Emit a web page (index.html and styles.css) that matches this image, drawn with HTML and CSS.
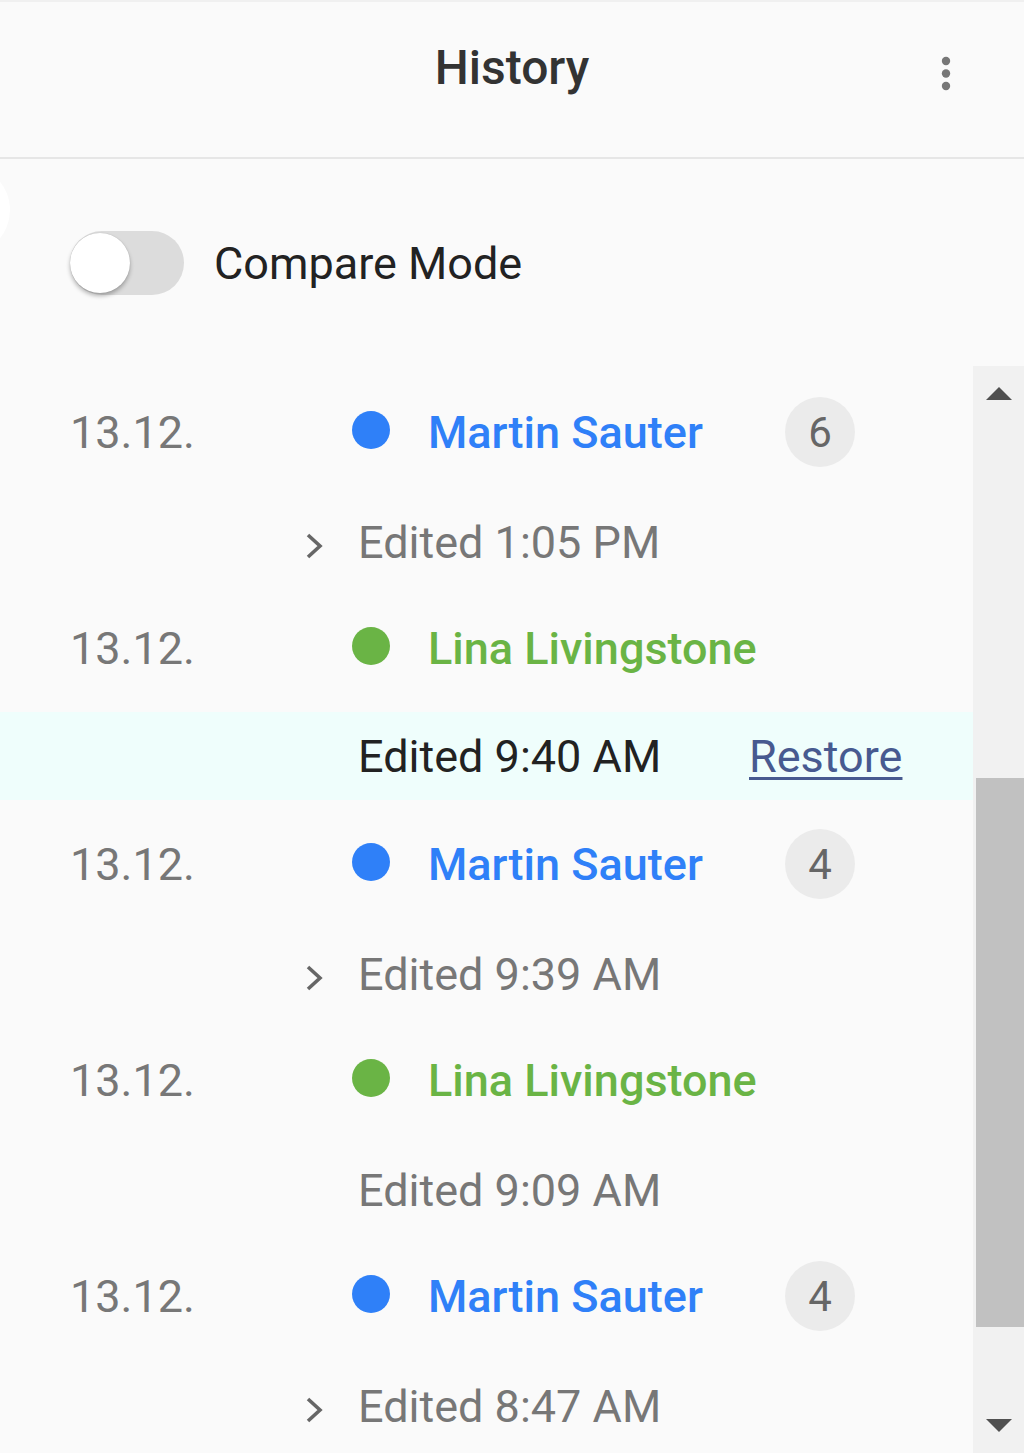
FILE: index.html
```html
<!DOCTYPE html>
<html lang="en">
<head>
<meta charset="utf-8">
<title>History</title>
<link rel="stylesheet" href="styles.css">
</head>
<body>
<div class="app">
  <header class="header">
    <div class="header-side"></div>
    <h1 class="title">History</h1>
    <div class="header-side header-right">
      <svg class="kebab" width="10" height="36" viewBox="0 0 10 36">
        <circle cx="5" cy="5" r="4.2" fill="#777"/>
        <circle cx="5" cy="17.5" r="4.2" fill="#777"/>
        <circle cx="5" cy="30" r="4.2" fill="#777"/>
      </svg>
    </div>
  </header>

  <div class="compare">
    <span class="ripple"></span>
    <div class="toggle"><span class="knob"></span></div>
    <span class="compare-label">Compare Mode</span>
  </div>

  <div class="list-wrap">
    <div class="list">
      <div class="row name-row">
        <span class="date">13.12.</span>
        <span class="dot blue"></span>
        <span class="name blue-text">Martin Sauter</span>
        <span class="badge">6</span>
      </div>
      <div class="row edit-row">
        <span class="chev"><svg width="20" height="26" viewBox="0 0 20 26"><path d="M3 2 L15 13 L3 24" fill="none" stroke="#666" stroke-width="3.6"/></svg></span>
        <span class="edited">Edited 1:05 PM</span>
      </div>

      <div class="row name-row">
        <span class="date">13.12.</span>
        <span class="dot green"></span>
        <span class="name green-text">Lina Livingstone</span>
      </div>
      <div class="row edit-row selected">
        <div class="sel-inner">
          <span class="chev"></span>
          <span class="edited dark">Edited 9:40 AM</span>
          <a class="restore" href="#">Restore</a>
        </div>
      </div>

      <div class="row name-row">
        <span class="date">13.12.</span>
        <span class="dot blue"></span>
        <span class="name blue-text">Martin Sauter</span>
        <span class="badge">4</span>
      </div>
      <div class="row edit-row">
        <span class="chev"><svg width="20" height="26" viewBox="0 0 20 26"><path d="M3 2 L15 13 L3 24" fill="none" stroke="#666" stroke-width="3.6"/></svg></span>
        <span class="edited">Edited 9:39 AM</span>
      </div>

      <div class="row name-row">
        <span class="date">13.12.</span>
        <span class="dot green"></span>
        <span class="name green-text">Lina Livingstone</span>
      </div>
      <div class="row edit-row">
        <span class="chev"></span>
        <span class="edited">Edited 9:09 AM</span>
      </div>

      <div class="row name-row">
        <span class="date">13.12.</span>
        <span class="dot blue"></span>
        <span class="name blue-text">Martin Sauter</span>
        <span class="badge">4</span>
      </div>
      <div class="row edit-row">
        <span class="chev"><svg width="20" height="26" viewBox="0 0 20 26"><path d="M3 2 L15 13 L3 24" fill="none" stroke="#666" stroke-width="3.6"/></svg></span>
        <span class="edited">Edited 8:47 AM</span>
      </div>
    </div>

    <div class="scrollbar">
      <div class="arrow up"></div>
      <div class="track-top"></div>
      <div class="thumb"></div>
      <div class="track-bottom"></div>
      <div class="arrow down"></div>
    </div>
  </div>
</div>
</body>
</html>
```

FILE: styles.css
```css
html, body {
  margin: 0;
  padding: 0;
  background: #fafafa;
  font-family: Roboto, "Liberation Sans", Arial, sans-serif;
}

.app {
  width: 1024px;
  height: 1453px;
  overflow: hidden;
  background: #fafafa;
}

.header {
  height: 155px;
  border-top: 2px solid #f0f0f0;
  border-bottom: 2px solid #e6e6e6;
  display: grid;
  grid-template-columns: 1fr auto 1fr;
  align-items: start;
  box-sizing: content-box;
}

.title {
  margin: 0;
  padding-top: 42px;
  font-size: 48px;
  line-height: 48px;
  font-weight: 500;
  color: #333;
}

.header-right {
  display: flex;
  justify-content: flex-end;
  padding-right: 73px;
  padding-top: 54px;
}

.compare {
  position: relative;
  height: 207px;
  display: flex;
  align-items: center;
  padding-left: 70px;
  gap: 30px;
}

.ripple {
  position: absolute;
  left: -80px;
  top: 6px;
  width: 90px;
  height: 90px;
  border-radius: 50%;
  background: #ffffff;
}

.toggle {
  position: relative;
  width: 114px;
  height: 64px;
  border-radius: 32px;
  background: #dcdcdc;
  display: flex;
  align-items: center;
}

.knob {
  width: 60px;
  height: 60px;
  border-radius: 50%;
  background: #ffffff;
  box-shadow: 0 3px 4px rgba(0, 0, 0, 0.28), 0 0 1px rgba(0, 0, 0, 0.2);
}

.compare-label {
  font-size: 45px;
  color: #222;
  margin-top: 2px;
}

.list-wrap {
  display: flex;
  height: 1087px;
}

.list {
  flex: 1;
  padding-top: 12px;
  overflow: hidden;
}

.row {
  height: 108px;
  display: flex;
  align-items: center;
  box-sizing: border-box;
}

.name-row {
  padding-left: 70px;
}

.date {
  width: 282px;
  font-size: 45px;
  color: #777;
}

.dot {
  width: 38px;
  height: 38px;
  border-radius: 50%;
  margin-right: 38px;
  margin-top: -4px;
}

.dot.blue { background: #2f80f8; }
.dot.green { background: #6ab445; }

.name {
  width: 357px;
  font-size: 45px;
  font-weight: 500;
}

.blue-text { color: #2f80f8; }
.green-text { color: #6ab445; }

.badge {
  width: 70px;
  height: 70px;
  border-radius: 50%;
  background: #ebebeb;
  color: #666;
  font-size: 42px;
  display: flex;
  align-items: center;
  justify-content: center;
}

.edit-row {
  padding-left: 305px;
}

.chev {
  width: 53px;
  display: flex;
  align-items: center;
  margin-top: 12px;
}

.edited {
  width: 390px;
  font-size: 45px;
  color: #777;
  margin-top: 4px;
}

.edited.dark {
  color: #222;
  margin-top: 0;
}

.selected {
  padding-left: 0;
  padding-top: 10px;
  padding-bottom: 10px;
}

.sel-inner {
  height: 88px;
  width: 100%;
  background: #effefc;
  display: flex;
  align-items: center;
  padding-left: 305px;
  box-sizing: border-box;
}

.restore {
  font-size: 45px;
  color: #475a90;
  text-decoration: underline;
  text-decoration-thickness: 3px;
  text-underline-offset: 5px;
  margin-left: 1px;
}

.scrollbar {
  width: 51px;
  background: #f1f1f1;
  display: flex;
  flex-direction: column;
  align-items: stretch;
}

.arrow {
  height: 52px;
  display: flex;
  justify-content: center;
}

.arrow.up::before {
  content: "";
  margin-top: 21px;
  width: 0;
  height: 0;
  border-left: 13px solid transparent;
  border-right: 13px solid transparent;
  border-bottom: 13px solid #505050;
}

.arrow.down::before {
  content: "";
  width: 0;
  height: 0;
  border-left: 13px solid transparent;
  border-right: 13px solid transparent;
  border-top: 13px solid #505050;
}

.track-top {
  height: 360px;
}

.thumb {
  height: 549px;
  margin-left: 3px;
  background: #c1c1c1;
}

.track-bottom {
  flex: 1;
}

.arrow.down {
  height: 34px;
  flex: none;
}
```
